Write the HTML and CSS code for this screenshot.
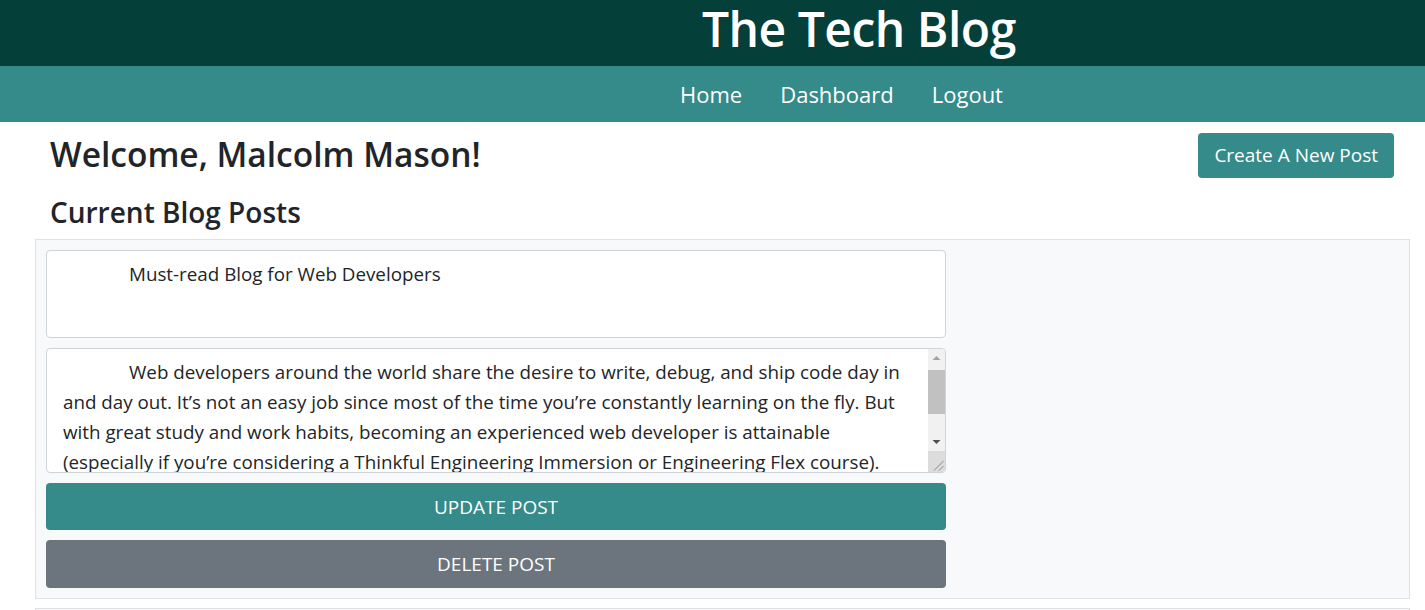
FILE: index.html
```html
<!DOCTYPE html>
<html lang="en">
<head>
<meta charset="utf-8">
<title>The Tech Blog</title>
<link rel="stylesheet" href="styles.css">
</head>
<body>
<header class="site-header">
  <h1 class="site-title">The Tech Blog</h1>
</header>
<nav class="site-nav">
  <a class="nav-link" href="#">Home</a>
  <a class="nav-link" href="#">Dashboard</a>
  <a class="nav-link" href="#">Logout</a>
</nav>
<main class="dashboard">
  <div class="welcome-row">
    <h2 class="welcome">Welcome, Malcolm Mason!</h2>
    <button class="btn btn-teal btn-new" type="button">Create A New Post</button>
  </div>
  <h3 class="section-title">Current Blog Posts</h3>
  <section class="post-panel">
    <form class="post-form">
      <textarea class="field field-title" rows="2">Must-read Blog for Web Developers</textarea>
      <div class="body-wrap">
        <textarea class="field field-body" rows="4">Web developers around the world share the desire to write, debug, and ship code day in and day out. It’s not an easy job since most of the time you’re constantly learning on the fly. But with great study and work habits, becoming an experienced web developer is attainable (especially if you’re considering a Thinkful Engineering Immersion or Engineering Flex course). One of the best ways to keep learning is to read what other developers write. Here are some of the blogs that every web developer should bookmark and check in on regularly.</textarea>
        <div class="fake-scroll" aria-hidden="true">
          <div class="sb-btn sb-up"><svg width="17" height="17" viewBox="0 0 17 17"><path d="M4.5 11 L8.5 7 L12.5 11 Z" fill="#a3a3a3"/></svg></div>
          <div class="sb-track"><div class="sb-thumb"></div></div>
          <div class="sb-btn sb-down"><svg width="17" height="17" viewBox="0 0 17 17"><path d="M4.5 6 L8.5 10 L12.5 6 Z" fill="#505050"/></svg></div>
          <div class="sb-corner"><svg width="17" height="21" viewBox="0 0 17 21"><path d="M6 19.5 L15.5 10 M11 19.5 L15.5 15" stroke="#8a8a8a" stroke-width="1"/></svg></div>
        </div>
      </div>
      <button class="btn btn-teal btn-wide" type="button">UPDATE POST</button>
      <button class="btn btn-gray btn-wide" type="button">DELETE POST</button>
    </form>
  </section>
  <section class="post-panel post-panel-next">
    <form class="post-form">
      <textarea class="field field-title" rows="2">Why MVC Is So Important</textarea>
    </form>
  </section>
</main>
</body>
</html>
```
FILE: styles.css
```css
html, body {
  margin: 0;
  padding: 0;
}
html {
  overflow: hidden;
}
body {
  font-family: "Open Sans", "Noto Sans", sans-serif;
  color: #212529;
  background: #ffffff;
}

.site-header {
  height: 66px;
  background: #053f3a;
  display: flex;
  align-items: flex-start;
  padding-left: 702px;
  box-sizing: border-box;
}
.site-title {
  margin: 0;
  color: #ffffff;
  font-size: 48px;
  font-weight: 600;
  letter-spacing: -0.5px;
  line-height: 58px;
}

.site-nav {
  height: 56px;
  background: #358a8a;
  display: flex;
  align-items: center;
  gap: 38px;
  padding-left: 680px;
  box-sizing: border-box;
}
.nav-link {
  color: #ffffff;
  text-decoration: none;
  font-size: 22px;
  line-height: 56px;
}

.welcome-row {
  display: flex;
  justify-content: space-between;
  align-items: flex-start;
  padding: 11px 31px 0 50px;
}
.welcome {
  margin: 1px 0 0;
  font-size: 33.5px;
  font-weight: 600;
  line-height: 40px;
}

.btn {
  font-family: inherit;
  border: 0;
  border-radius: 4px;
  color: #ffffff;
  cursor: pointer;
  white-space: nowrap;
}
.btn-teal {
  background: #358a8a;
}
.btn-gray {
  background: #6c757d;
}
.btn-new {
  font-size: 19px;
  line-height: 29px;
  padding: 8px 16px;
  min-width: 195px;
}

.section-title {
  margin: 17px 0 10px 50px;
  font-size: 28px;
  font-weight: 600;
  line-height: 34px;
}

.post-panel {
  margin: 0 15px 0 35px;
  background: #f8f9fa;
  border: 1px solid #dfe2e5;
  padding: 10px 10px 10px;
}
.post-panel-next {
  margin-top: 9px;
  height: 120px;
}
.post-form {
  width: 900px;
  display: flex;
  flex-direction: column;
  gap: 10px;
}

.field {
  display: block;
  box-sizing: border-box;
  width: 100%;
  margin: 0;
  font-family: inherit;
  font-size: 18.8px;
  line-height: 30px;
  color: #212529;
  background: #ffffff;
  border: 1px solid #ced4da;
  border-radius: 4px;
  padding: 8px 12px 8px 16px;
  text-indent: 66px;
}
.field-title {
  height: 88px;
  resize: none;
  overflow: hidden;
}

.body-wrap {
  position: relative;
}
.field-body {
  height: 125px;
  overflow: hidden;
  resize: none;
  padding-right: 33px;
}
.fake-scroll {
  position: absolute;
  top: 1px;
  right: 1px;
  bottom: 1px;
  width: 17px;
  display: flex;
  flex-direction: column;
  background: #f1f1f1;
  border-radius: 0 3px 3px 0;
  overflow: hidden;
}
.sb-btn {
  height: 17px;
  flex: none;
}
.sb-btn svg,
.sb-corner svg {
  display: block;
}
.sb-track {
  flex: 1;
  padding-top: 4px;
}
.sb-thumb {
  height: 44px;
  background: #c1c1c1;
}
.sb-corner {
  height: 21px;
  flex: none;
  background: #dcdcdc;
}

.btn-wide {
  width: 100%;
  height: 47px;
  font-size: 19px;
  line-height: 28px;
  padding: 9px 16px;
}
.btn-gray.btn-wide {
  height: 48px;
}
```
